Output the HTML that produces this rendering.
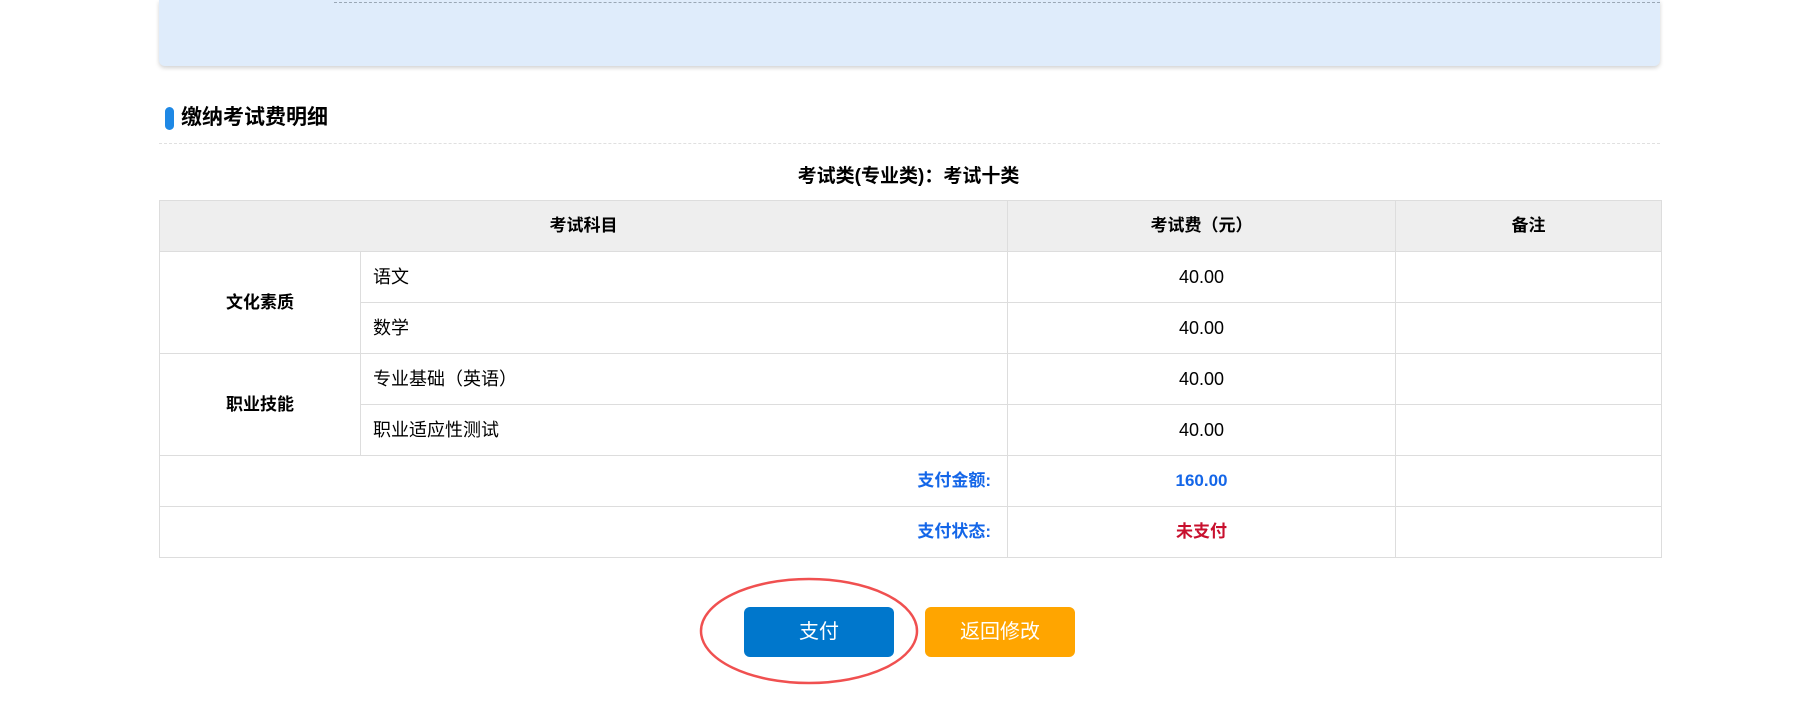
<!DOCTYPE html>
<html><head><meta charset="utf-8"><style>
body{margin:0;width:1817px;height:720px;background:#fff;font-family:"Liberation Sans","Noto Sans CJK SC",sans-serif;position:relative;overflow:hidden;color:#000}
.panel{position:absolute;left:159px;top:0;width:1501px;height:66px;background:#dfecfb;border-radius:0 0 6px 6px;box-shadow:0 2px 4px rgba(0,0,0,.18)}
.panel .dl{position:absolute;left:175px;right:0;top:2px;border-top:1px dashed #9aa7b5}
.hbar{position:absolute;left:165px;top:107px;width:9px;height:23px;background:#1e88e5;border-radius:5px}
.h{position:absolute;left:181px;top:104px;font-size:21px;font-weight:bold;line-height:28px}
.hl{position:absolute;left:159px;width:1501px;top:143px;border-top:1px dashed #e0e0e0}
.sub{position:absolute;left:0;width:1817px;text-align:center;top:164px;font-size:19px;font-weight:bold;line-height:26px}
table{position:absolute;left:159px;top:200px;width:1502px;border-collapse:collapse;table-layout:fixed;font-size:18px}
td,th{border:1px solid #ddd;height:50px;padding:0;line-height:20px}
th{background:#eee;font-weight:bold;font-size:17px}
.c{text-align:center}.l{padding-left:12px}.b{font-weight:bold;font-size:17px}
.blue{color:#1466e8;font-weight:bold;font-size:17px}.red{color:#c8102e;font-weight:bold;font-size:17px}
.btn{position:absolute;top:607px;width:150px;height:50px;border-radius:6px;color:#fff;font-size:20px;text-align:center;line-height:50px}
</style></head><body>
<div class="panel"><div class="dl"></div></div>
<div class="hbar"></div><div class="h">缴纳考试费明细</div>
<div class="hl"></div>
<div class="sub">考试类(专业类)：考试十类</div>
<table>
<colgroup><col style="width:201px"><col style="width:647px"><col style="width:388px"><col style="width:266px"></colgroup>
<tr><th colspan="2">考试科目</th><th>考试费（元）</th><th>备注</th></tr>
<tr><td rowspan="2" class="c b">文化素质</td><td class="l">语文</td><td class="c">40.00</td><td></td></tr>
<tr><td class="l">数学</td><td class="c">40.00</td><td></td></tr>
<tr><td rowspan="2" class="c b">职业技能</td><td class="l">专业基础（英语）</td><td class="c">40.00</td><td></td></tr>
<tr><td class="l">职业适应性测试</td><td class="c">40.00</td><td></td></tr>
<tr><td colspan="2" style="text-align:right;padding-right:16px" class="blue">支付金额:</td><td class="c blue">160.00</td><td></td></tr>
<tr><td colspan="2" style="text-align:right;padding-right:16px" class="blue">支付状态:</td><td class="c red">未支付</td><td></td></tr>
</table>
<div class="btn" style="left:744px;background:#0077cc">支付</div>
<div class="btn" style="left:925px;background:#ffa500">返回修改</div>
<svg style="position:absolute;left:0;top:0" width="1817" height="720"><ellipse cx="809" cy="631" rx="108" ry="52" fill="none" stroke="#f05050" stroke-width="2.5"/></svg>
</body></html>
